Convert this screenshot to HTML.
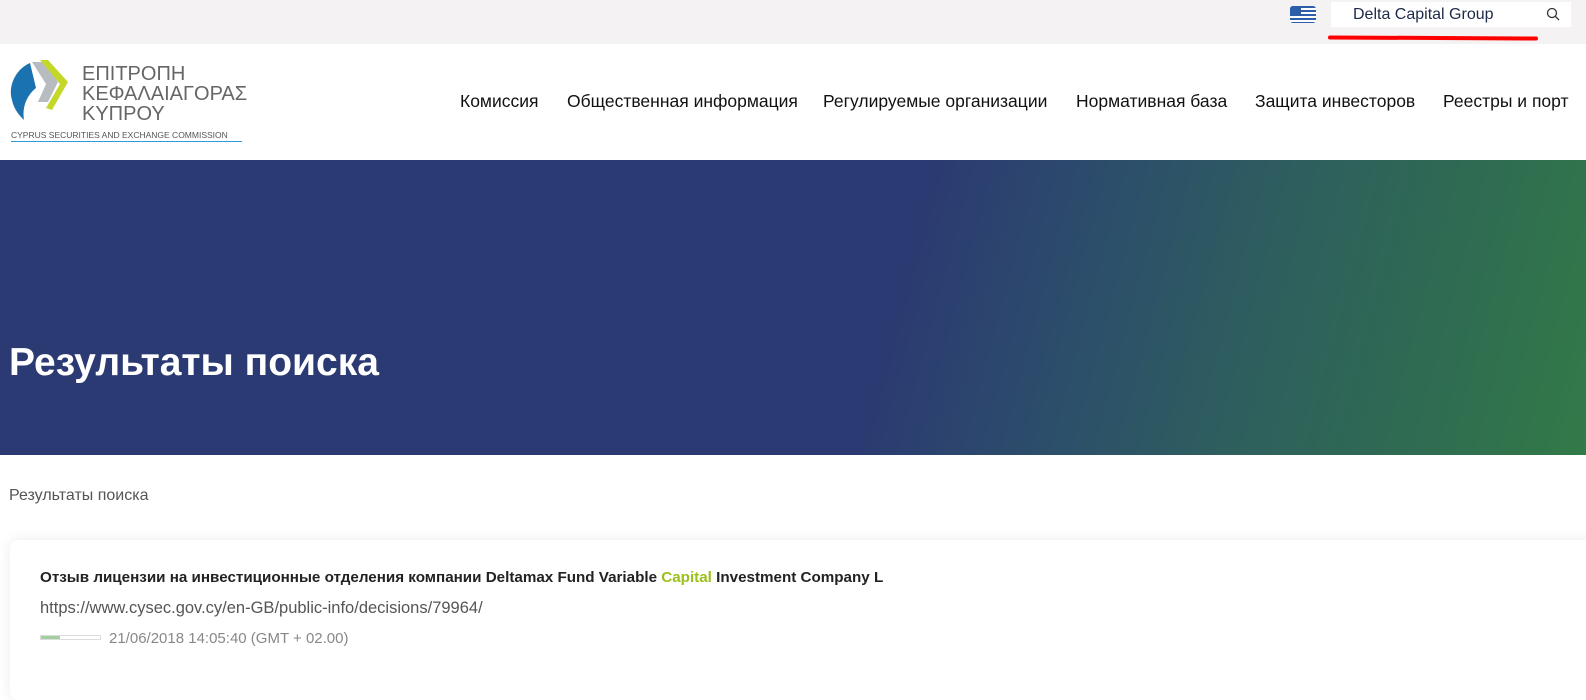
<!DOCTYPE html>
<html><head><meta charset="utf-8"><style>
*{margin:0;padding:0;box-sizing:border-box}
body{width:1586px;height:685px;overflow:hidden;font-family:"Liberation Sans",Roboto,sans-serif;background:#fff;position:relative}
.top{position:absolute;left:0;top:0;width:1586px;height:44px;background:#f4f2f3}
.flag{position:absolute;left:1290px;top:6px;width:26px;height:17px;border-radius:3px;background:repeating-linear-gradient(#2f5ea8 0 2px,#fff 2px 4px);overflow:hidden}
.flag:before{content:"";position:absolute;left:0;top:0;width:11px;height:9px;background:#2f5ea8}
.sb{position:absolute;left:1331px;top:2px;width:240px;height:25px;background:#fff;font-size:16px;color:#1e2a4a;padding:4px 0 0 22px}
.red{position:absolute;left:1328px;top:36px;width:210px;height:4px;background:#f00;border-radius:2px;transform:rotate(0.3deg)}
.nav{position:absolute;top:91px;font-size:17.5px;color:#111;white-space:nowrap}
.hero{position:absolute;left:0;top:160px;width:1586px;height:295px;background:linear-gradient(105deg,#2b3a72 0%,#2b3a72 56%,#2c4f6a 68%,#2e5e5e 78%,#2f6c51 90%,#327a48 100%)}
.hero h1{position:absolute;left:9px;top:181px;color:#fff;font-size:39px;font-weight:bold}
.bc{position:absolute;left:9px;top:487px;font-size:16px;color:#555}
.card{position:absolute;left:10px;top:540px;width:1590px;height:160px;background:#fff;border-radius:8px;box-shadow:0 0 14px rgba(0,0,0,.08)}
.t{position:absolute;left:40px;top:569px;font-size:15.2px;font-weight:bold;color:#222}
.t span{color:#9bbf1b}
.u{position:absolute;left:40px;top:599px;font-size:16.5px;color:#555}
.bar{position:absolute;left:40px;top:635px;width:61px;height:5px;border:1px solid #ddd}
.bar i{display:block;width:19px;height:3px;background:#a3cf9e}
.d{position:absolute;left:109px;top:630px;font-size:15px;color:#888}
</style></head><body>
<div class="top"></div>
<div class="flag"></div>
<div class="sb">Delta Capital Group</div>
<svg style="position:absolute;left:1546px;top:7px" width="14" height="14" viewBox="0 0 14 14"><circle cx="6" cy="6" r="4.5" fill="none" stroke="#333" stroke-width="1.3"/><path d="M9.3 9.3L13 13" stroke="#333" stroke-width="1.3"/></svg>
<div class="red"></div>
<svg style="position:absolute;left:8px;top:58px" width="70" height="70" viewBox="0 0 70 70">
<path d="M22 5 C6 12 0 30 4 42 C6 52 12 58 16 62 C14 50 18 38 28 30 Z" fill="#1a73b0"/>
<path d="M24 4 L36 4 L50 24 L40 44 L30 44 L38 26 Z" fill="#b8bcc0"/>
<path d="M32 2 L40 2 L60 24 L44 52 L38 50 L52 26 Z" fill="#c4d82a"/>
</svg>
<div style="position:absolute;left:82px;top:64px;font-size:20px;line-height:20px;color:#666">ΕΠΙΤΡΟΠΗ<br>ΚΕΦΑΛΑΙΑΓΟΡΑΣ<br>ΚΥΠΡΟΥ</div>
<div style="position:absolute;left:11px;top:130px;font-size:8.5px;color:#555;white-space:nowrap">CYPRUS SECURITIES AND EXCHANGE COMMISSION</div>
<div style="position:absolute;left:11px;top:141px;width:231px;height:1px;background:#2b9ce0"></div>
<div class="nav" style="left:460px">Комиссия</div>
<div class="nav" style="left:567px">Общественная информация</div>
<div class="nav" style="left:823px">Регулируемые организации</div>
<div class="nav" style="left:1076px">Нормативная база</div>
<div class="nav" style="left:1255px">Защита инвесторов</div>
<div class="nav" style="left:1443px">Реестры и порт</div>
<div class="hero"><h1>Результаты поиска</h1></div>
<div class="bc">Результаты поиска</div>
<div class="card"></div>
<div class="t">Отзыв лицензии на инвестиционные отделения компании Deltamax Fund Variable <span>Capital</span> Investment Company L</div>
<div class="u">https://www.cysec.gov.cy/en-GB/public-info/decisions/79964/</div>
<div class="bar"><i></i></div>
<div class="d">21/06/2018 14:05:40 (GMT + 02.00)</div>
</body></html>
